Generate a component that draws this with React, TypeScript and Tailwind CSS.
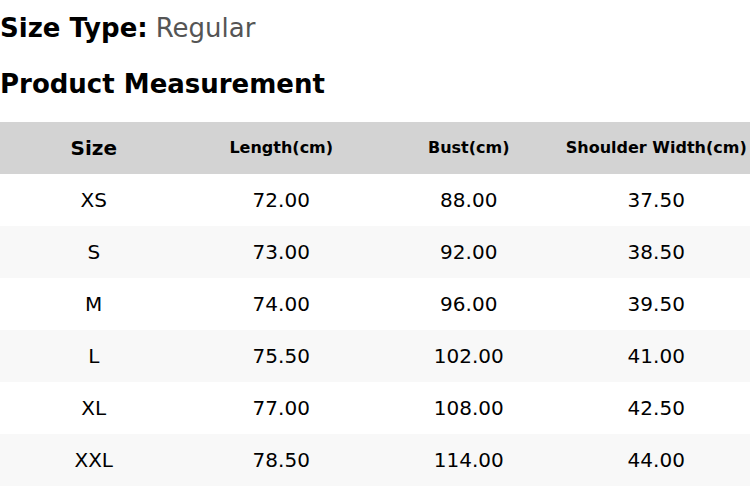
const rows = [
  ['XS', '72.00', '88.00', '37.50'],
  ['S', '73.00', '92.00', '38.50'],
  ['M', '74.00', '96.00', '39.50'],
  ['L', '75.50', '102.00', '41.00'],
  ['XL', '77.00', '108.00', '42.50'],
  ['XXL', '78.50', '114.00', '44.00'],
];

export default function App() {
  return (
    <div className="w-[750px] h-[486px] overflow-hidden bg-white text-black font-['DejaVu_Sans',sans-serif]">
      <div className="h-[56px] flex items-center text-[26px] leading-none">
        <span className="font-bold">Size Type:</span>
        <span className="ml-[8px] text-[#555]">Regular</span>
      </div>
      <div className="h-[56px] flex items-center text-[26px] font-bold leading-none">
        Product Measurement
      </div>
      <div className="h-[10px]" />
      <div className="grid grid-cols-4 h-[52px] bg-[#d3d3d3] items-center text-center font-bold">
        <div className="text-[20px]">Size</div>
        <div className="text-[16px]">Length(cm)</div>
        <div className="text-[16px]">Bust(cm)</div>
        <div className="text-[16px] whitespace-nowrap">Shoulder Width(cm)</div>
      </div>
      {rows.map((r, i) => (
        <div
          key={r[0]}
          className={`grid grid-cols-4 h-[52px] items-center text-center text-[20px] ${i % 2 ? 'bg-[#f8f8f8]' : 'bg-white'}`}
        >
          {r.map((c, j) => (
            <div key={j}>{c}</div>
          ))}
        </div>
      ))}
    </div>
  );
}
